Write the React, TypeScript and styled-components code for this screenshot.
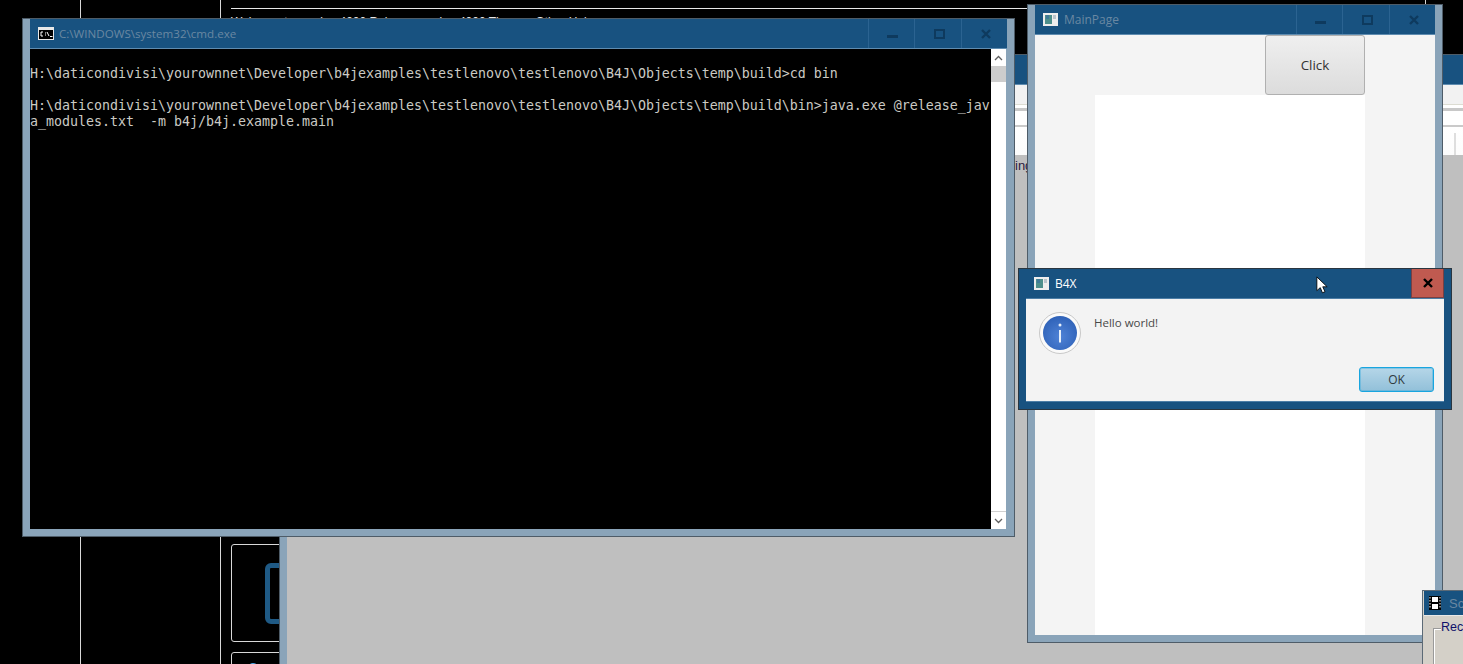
import React from "react";
import styled, { createGlobalStyle } from "styled-components";

const Global = createGlobalStyle`
  html, body { margin: 0; padding: 0; background: #000; overflow: hidden; }
  #root { width: 1463px; height: 664px; }
`;

const Desktop = styled.div`
  position: relative;
  width: 1463px;
  height: 664px;
  overflow: hidden;
  background: #000;
  font-family: "Open Sans", "Noto Sans", sans-serif;
`;

const VLine = styled.div<{ $x: number }>`
  position: absolute;
  left: ${(p) => p.$x}px;
  top: 0;
  bottom: 0;
  width: 1px;
  background: #d8d8d8;
`;

const HLine = styled.div`
  position: absolute;
  left: 231px;
  top: 8px;
  width: 800px;
  height: 1px;
  background: #e8e8e8;
`;

const CutText = styled.div`
  position: absolute;
  left: 231px;
  top: 15px;
  color: #e8e8e8;
  font: 12px "Liberation Sans", sans-serif;
  white-space: pre;
`;

const Card = styled.div<{ $top: number; $height: number }>`
  position: absolute;
  left: 231px;
  top: ${(p) => p.$top}px;
  width: 80px;
  height: ${(p) => p.$height}px;
  border: 1px solid #d8d8d8;
  border-radius: 3px;
  box-sizing: border-box;
`;

const CardGlyph = styled.div`
  position: absolute;
  left: 33px;
  top: 18px;
  width: 40px;
  height: 61px;
  border: 5px solid #1f5a85;
  border-radius: 6px;
  box-sizing: border-box;
`;

const CardArc = styled.svg`
  position: absolute;
  left: 16px;
  top: 7px;
`;

const Win = styled.div<{ $x: number; $y: number; $w: number; $h: number }>`
  position: absolute;
  left: ${(p) => p.$x}px;
  top: ${(p) => p.$y}px;
  width: ${(p) => p.$w}px;
  height: ${(p) => p.$h}px;
  box-sizing: border-box;
  border: 1px solid #4e5c68;
  background: #8aa4b9;
  padding: 0 7px 7px 7px;
  display: flex;
  flex-direction: column;
`;

const TitleBar = styled.div`
  height: 29px;
  flex: none;
  background: #185280;
  border-bottom: 1px solid #5f8cb0;
  display: flex;
  align-items: center;
  padding-left: 8px;
`;

const TitleLabel = styled.span<{ $active?: boolean; $size?: number; $gap?: number }>`
  margin-left: ${(p) => p.$gap ?? 6}px;
  margin-top: -1px;
  color: ${(p) => (p.$active ? "#ffffff" : "#6a88a2")};
  font: ${(p) => p.$size ?? 12}px "Open Sans", sans-serif;
  flex: 1;
  white-space: nowrap;
`;

const CaptionBtn = styled.div`
  width: 46.5px;
  height: 29px;
  flex: none;
  border-left: 1px solid #2b6391;
  padding-left: 3px;
  box-sizing: border-box;
  display: flex;
  align-items: center;
  justify-content: center;
`;

const Body = styled.div`
  flex: 1;
  min-height: 0;
  display: flex;
`;

const Console = styled.pre`
  flex: 1;
  margin: 0;
  padding-top: 17px;
  background: #000;
  color: #cbcac4;
  font: 13.3px/16px "DejaVu Sans Mono", monospace;
  letter-spacing: -0.007px;
  overflow: hidden;
  white-space: pre;
`;

const Scrollbar = styled.div`
  width: 15px;
  margin-right: 1px;
  flex: none;
  background: #fff;
  display: flex;
  flex-direction: column;
`;

const ScrollBtn = styled.div`
  height: 17px;
  flex: none;
  display: flex;
  align-items: center;
  justify-content: center;
  background: #fff;
`;

const ScrollThumb = styled.div`
  height: 16px;
  flex: none;
  background: #cdcdcd;
`;

const ScrollTrack = styled.div`
  flex: 1;
  background: #fff;
`;

const ScrollFoot = styled(ScrollBtn)`
  border-top: 1px solid #d0d0d0;
`;

const BackBody = styled.div`
  flex: 1;
  display: flex;
  flex-direction: column;
  background: #bfbfbf;
`;

const Strip = styled.div`
  position: relative;
  height: 70px;
  flex: none;
  background: linear-gradient(
    #f2f2f2 0, #f2f2f2 19px, #dcdcd2 19px, #dcdcd2 20px, #ffffff 20px, #ffffff 23px, #c8c8c8 23px, #c8c8c8 26px,
    #fff 26px, #fff 40px, #cacaca 40px, #cacaca 42px, #fff 42px, #fcfcfc 70px
  );
`;

const StripDivider = styled.div`
  position: absolute;
  left: 1167px;
  top: 48px;
  bottom: 0;
  width: 2px;
  background: #dedede;
`;

const IngRow = styled.div`
  color: #2a2040;
  font: 13px "Liberation Sans", sans-serif;
  height: 20px;
  padding: 3px 0 0 728px;
`;

const MainContent = styled.div`
  flex: 1;
  background: #f4f4f4;
  padding-left: 60px;
  padding-right: 70px;
  display: flex;
  flex-direction: column;
`;

const ClickRow = styled.div`
  display: flex;
  justify-content: flex-end;
`;

const ClickButton = styled.div`
  width: 100px;
  height: 60px;
  box-sizing: border-box;
  border: 1px solid #b0b0b0;
  border-radius: 3px;
  background: linear-gradient(#efefef, #dcdcdc);
  display: flex;
  align-items: center;
  justify-content: center;
  font: 13.4px "Open Sans", sans-serif;
  color: #333;
`;

const WhitePane = styled.div`
  flex: 1;
  background: #fff;
`;

const Dialog = styled(Win)`
  background: #185280;
  border-color: #2a3640;
`;

const DialogTitleBar = styled(TitleBar)`
  border-bottom: none;
  height: 29px;
`;

const CloseRed = styled.div`
  width: 33px;
  height: 29px;
  background: #c05a50;
  border: 1px solid #7a3f42;
  border-top: none;
  box-sizing: border-box;
  display: flex;
  align-items: center;
  justify-content: center;
`;

const DialogBody = styled.div`
  flex: 1;
  background: #f3f3f3;
  border-top: 1px solid #4d7ea6;
  border-bottom: 1px solid #4d7ea6;
  display: grid;
  grid-template-columns: 68px 1fr;
  grid-template-rows: 1fr auto;
  padding: 0 10px 9px 0;
`;

const InfoWrap = styled.div`
  padding: 13px 0 0 13px;
`;

const Message = styled.div`
  padding-top: 16px;
  font: 11.5px "Open Sans", sans-serif;
  color: #484848;
`;

const OkButton = styled.div`
  grid-column: 2;
  justify-self: end;
  width: 75px;
  height: 25px;
  box-sizing: border-box;
  border: 1px solid #18a5df;
  box-shadow: inset 0 0 0 1px rgba(40, 165, 220, 0.35);
  border-radius: 3px;
  background: linear-gradient(#b5d6e8, #92c0d9);
  display: flex;
  align-items: center;
  justify-content: center;
  font: 12px "Open Sans", sans-serif;
  color: #2f3a40;
`;

const Recorder = styled.div`
  position: absolute;
  left: 1422px;
  top: 590px;
  width: 60px;
  height: 90px;
  background: #d4d0c8;
  border: 1px solid #5c6a76;
  box-sizing: border-box;
  padding: 0 2px 0 1px;
`;

const RecorderTitle = styled.div`
  background: #185280;
  height: 24px;
  margin: 0 -2px 0 0;
  display: flex;
  align-items: center;
  padding-left: 5px;
  color: #6a88a2;
  font: 13px "Liberation Sans", sans-serif;
  gap: 8px;
  border-bottom: 1px solid #e8e8e8;
`;

const RecGroup = styled.div`
  position: relative;
  margin: 13px 0 0 10px;
  height: 60px;
  border: 1px solid #fff;
  outline: 1px solid #9a9a9a;
`;

const RecLabel = styled.span`
  position: absolute;
  left: 6px;
  top: -10px;
  background: #d4d0c8;
  color: #10106a;
  font: 12.5px "Liberation Sans", sans-serif;
`;

const Cursor = styled.svg`
  position: absolute;
  left: 1316px;
  top: 276px;
`;

const AppIcon = () => (
  <svg width="15" height="13" viewBox="0 0 15 13" style={{ flex: "none" }}>
    <rect width="15" height="13" fill="#eeeeee" />
    <rect x="2" y="2" width="7" height="9" fill="#4d8f8c" />
    <rect x="3" y="2" width="3" height="4" fill="#3f7a98" />
    <rect x="10" y="2" width="3" height="4" fill="#b8c4cc" />
  </svg>
);

const CmdIcon = () => (
  <svg width="16" height="13" viewBox="0 0 16 13" style={{ flex: "none" }}>
    <rect width="16" height="13" fill="#e8e8e8" />
    <rect x="1" y="3" width="14" height="9" fill="#000" />
    <path d="M5 5H3v4h2M7 6h1M7 8h1M9 5l2 4M12 9.500h2.500" stroke="#fff" strokeWidth="1" fill="none" />
  </svg>
);

const MinIcon = () => (
  <svg width="11" height="11" viewBox="0 0 11 11"><rect x="0" y="7" width="11" height="3" fill="#0e3a5e" /></svg>
);
const MaxIcon = () => (
  <svg width="11" height="10" viewBox="0 0 11 10"><rect x="1" y="1" width="9" height="8" fill="none" stroke="#0e3a5e" strokeWidth="2" /></svg>
);
const XIcon = ({ color = "#0e3a5e" }: { color?: string }) => (
  <svg width="10" height="10" viewBox="0 0 10 10"><path d="M1 1l8 8M9 1l-8 8" stroke={color} strokeWidth="2.4" /></svg>
);

const Chevron = ({ up }: { up?: boolean }) => (
  <svg width="9" height="6" viewBox="0 0 9 6">
    <path d={up ? "M1 5l3.500-3.500L8 5" : "M1 1l3.500 3.500L8 1"} stroke="#606060" strokeWidth="1.3" fill="none" />
  </svg>
);

const InfoIcon = () => (
  <svg width="42" height="42" viewBox="0 0 42 42">
    <defs>
      <radialGradient id="ig" cx="50%" cy="60%" r="60%">
        <stop offset="0" stopColor="#4f82d6" />
        <stop offset="1" stopColor="#2f62b8" />
      </radialGradient>
    </defs>
    <circle cx="21" cy="21" r="20.500" fill="#fafafa" stroke="#c8c8c8" />
    <circle cx="21" cy="21" r="17" fill="url(#ig)" />
    <circle cx="21" cy="13" r="1.500" fill="#e8f0fa" />
    <rect x="20" y="18" width="2" height="12.500" fill="#e8f0fa" />
  </svg>
);

const Film = () => (
  <svg width="12" height="14" viewBox="0 0 12 14" style={{ flex: "none" }}>
    <rect width="12" height="14" fill="#000" />
    <rect x="3" y="1" width="6" height="5" fill="#fff" />
    <rect x="3" y="8" width="6" height="5" fill="#fff" />
    <path d="M1 1v12M11 1v12" stroke="#fff" strokeDasharray="1.500 1.500" />
  </svg>
);

export default function App() {
  return (
    <Desktop>
      <Global />
      <VLine $x={80} />
      <VLine $x={220} />
      <VLine $x={1425} />
      <HLine />
      <CutText>Welcome to version 4000 Release version 4000 Themes Other Help</CutText>
      <Card $top={544} $height={98}>
        <CardGlyph />
      </Card>
      <Card $top={652} $height={30}>
        <CardArc width="10" height="10" viewBox="0 0 10 10">
          <path d="M1 8a4 4 0 0 1 8 0" fill="none" stroke="#4aa8e8" strokeWidth="2" />
        </CardArc>
      </Card>

      <Win $x={279} $y={54} $w={1300} $h={700}>
        <TitleBar />
        <BackBody>
          <Strip><StripDivider /></Strip>
          <IngRow>ing</IngRow>
        </BackBody>
      </Win>

      <Win $x={22} $y={18} $w={993} $h={519}>
        <TitleBar>
          <CmdIcon />
          <TitleLabel $size={11.6} $gap={5}>C:\WINDOWS\system32\cmd.exe</TitleLabel>
          <CaptionBtn><MinIcon /></CaptionBtn>
          <CaptionBtn><MaxIcon /></CaptionBtn>
          <CaptionBtn><XIcon /></CaptionBtn>
        </TitleBar>
        <Body>
          <Console>{`H:\\daticondivisi\\yourownnet\\Developer\\b4jexamples\\testlenovo\\testlenovo\\B4J\\Objects\\temp\\build>cd bin

H:\\daticondivisi\\yourownnet\\Developer\\b4jexamples\\testlenovo\\testlenovo\\B4J\\Objects\\temp\\build\\bin>java.exe @release_jav
a_modules.txt  -m b4j/b4j.example.main`}</Console>
          <Scrollbar>
            <ScrollBtn><Chevron up /></ScrollBtn>
            <ScrollThumb />
            <ScrollTrack />
            <ScrollFoot><Chevron /></ScrollFoot>
          </Scrollbar>
        </Body>
      </Win>

      <Win $x={1027} $y={4} $w={416} $h={639}>
        <TitleBar>
          <AppIcon />
          <TitleLabel>MainPage</TitleLabel>
          <CaptionBtn><MinIcon /></CaptionBtn>
          <CaptionBtn><MaxIcon /></CaptionBtn>
          <CaptionBtn><XIcon /></CaptionBtn>
        </TitleBar>
        <MainContent>
          <ClickRow><ClickButton>Click</ClickButton></ClickRow>
          <WhitePane />
        </MainContent>
      </Win>

      <Dialog $x={1018} $y={268} $w={434} $h={142}>
        <DialogTitleBar>
          <AppIcon />
          <TitleLabel $active>B4X</TitleLabel>
          <CloseRed><XIcon color="#000" /></CloseRed>
        </DialogTitleBar>
        <DialogBody>
          <InfoWrap><InfoIcon /></InfoWrap>
          <Message>Hello world!</Message>
          <OkButton>OK</OkButton>
        </DialogBody>
      </Dialog>

      <Recorder>
        <RecorderTitle><Film />Scr</RecorderTitle>
        <RecGroup><RecLabel>Record</RecLabel></RecGroup>
      </Recorder>

      <Cursor width="12" height="19" viewBox="0 0 14 22">
        <path d="M1 1v16l4-3.500 2.500 6 3-1.200-2.600-5.800H13z" fill="#fff" stroke="#000" strokeWidth="1" />
      </Cursor>
    </Desktop>
  );
}
